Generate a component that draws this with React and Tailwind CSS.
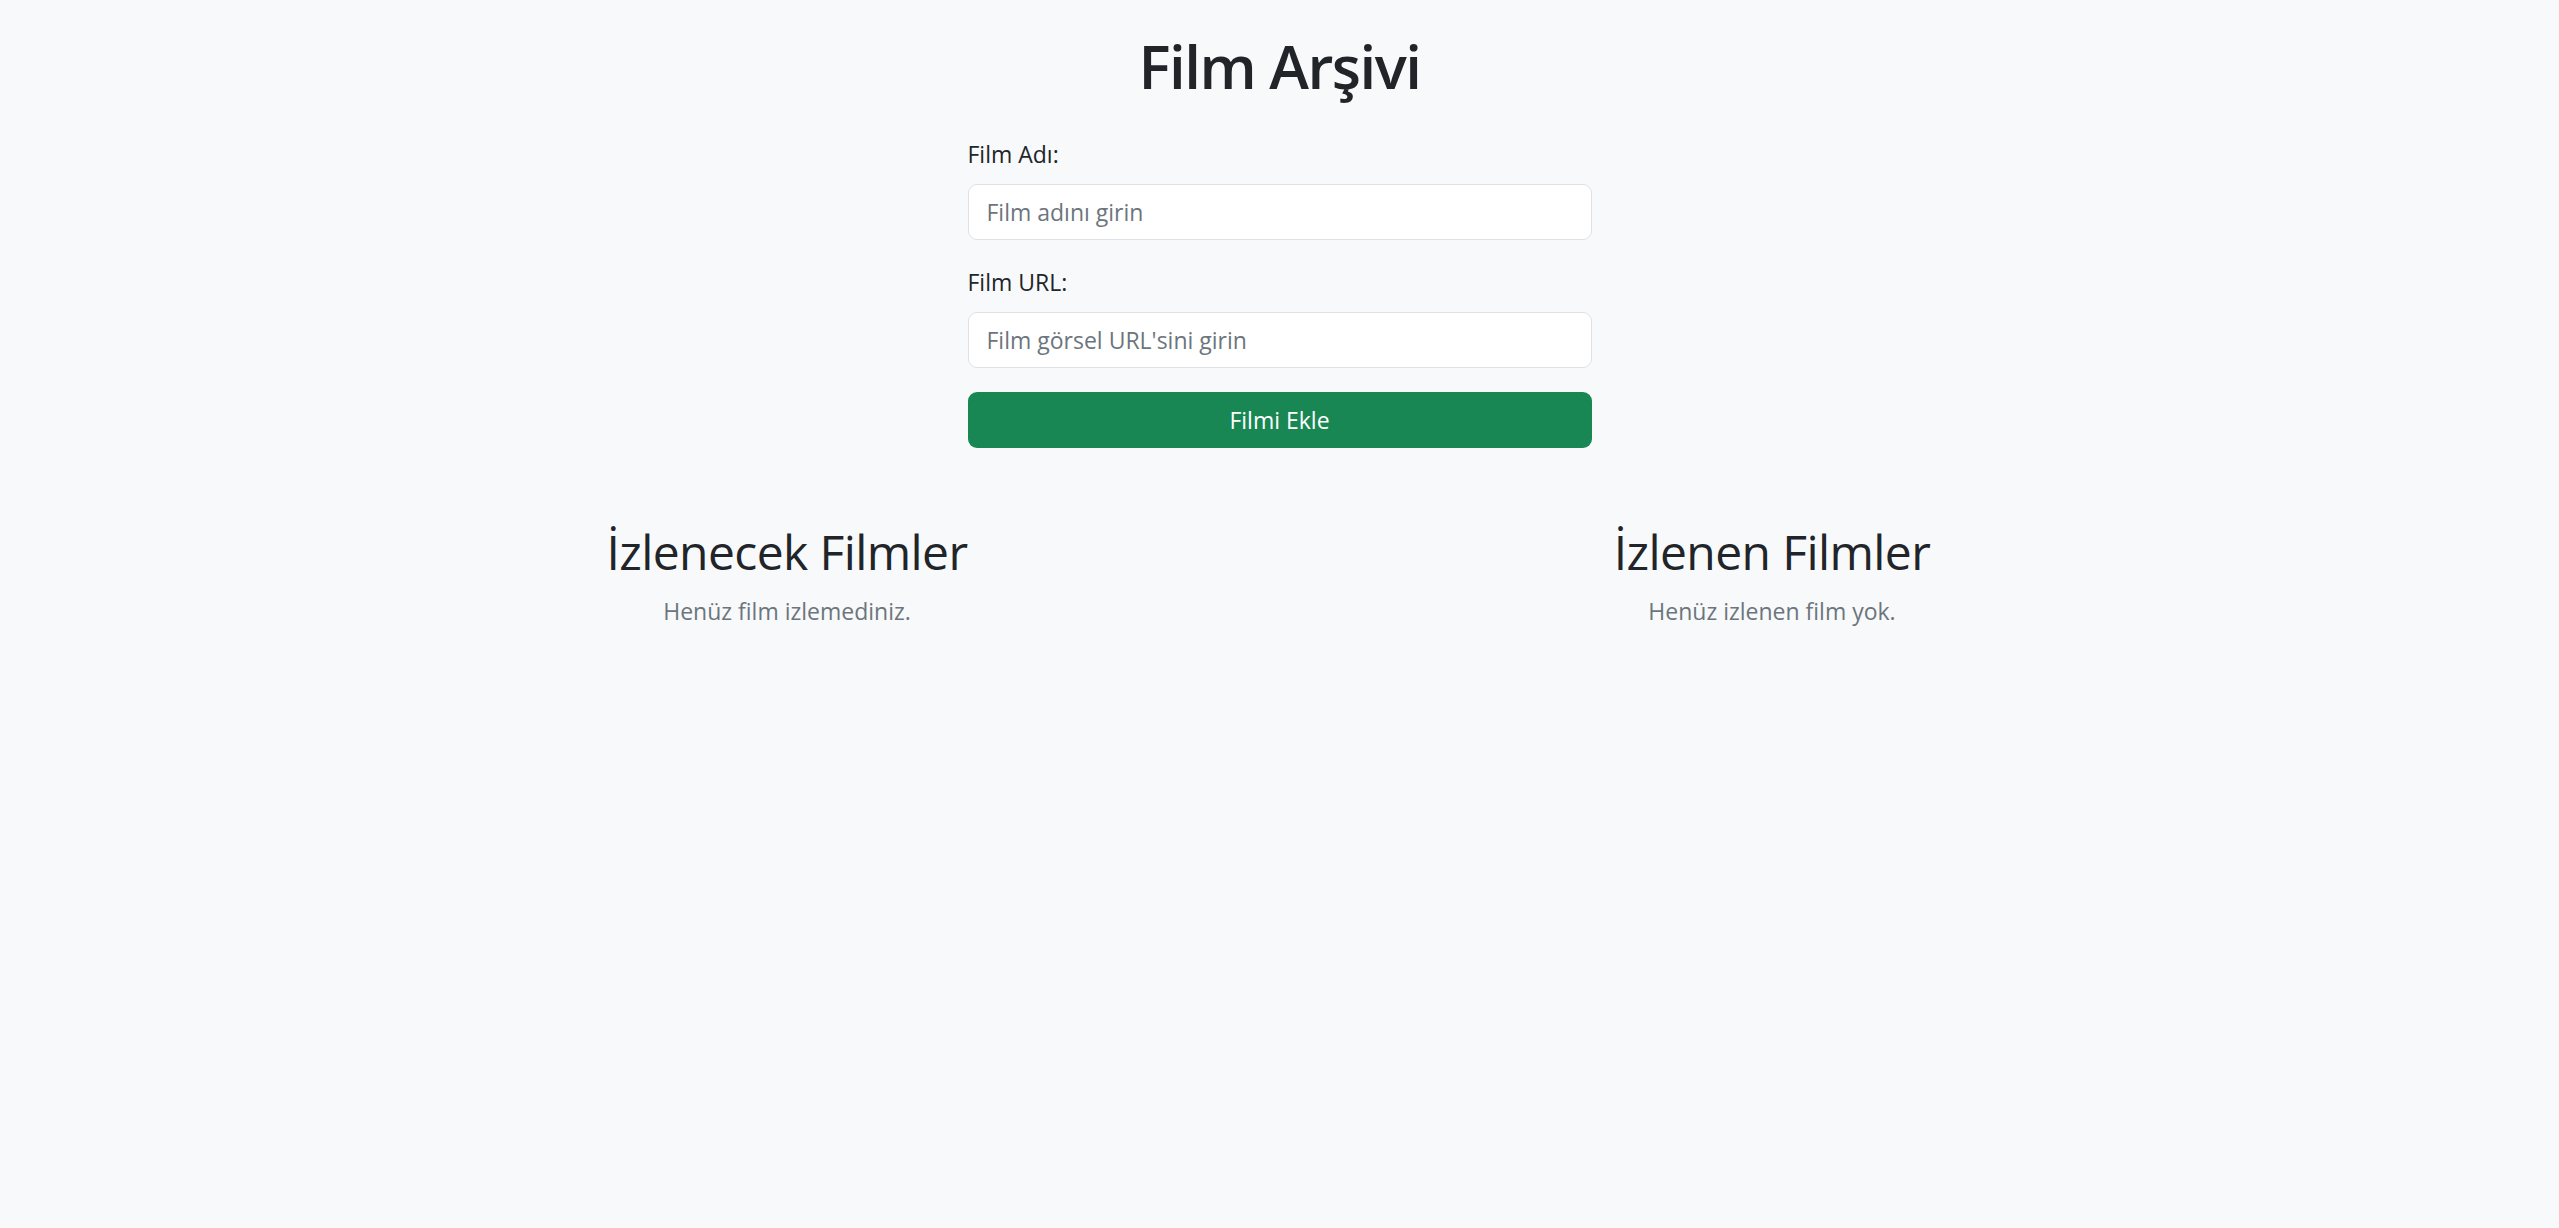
import React from "react";

function Field({ label, placeholder }) {
  return (
    <div className="mb-[24px]">
      <label className="block mb-[12px] text-[23px] leading-[36px] text-[#212529]">{label}</label>
      <input
        type="text"
        placeholder={placeholder}
        className="block w-full h-[56px] px-[18px] bg-white border border-[#dee2e6] rounded-[9px] text-[23px] text-[#212529] placeholder:text-[#6c757d] outline-none"
      />
    </div>
  );
}

export default function App() {
  return (
    <div className="min-h-[1228px] bg-[#f8f9fa] text-[#212529] font-['Open_Sans',sans-serif]">
      <div className="w-[1970px] mx-auto pt-[30px]">
        <h1 className="text-center text-[60px] leading-[72px] font-semibold tracking-[-1.5px] mb-[34px]">Film Arşivi</h1>

        <form className="w-[624px] mx-auto" onSubmit={(e) => e.preventDefault()}>
          <Field label="Film Adı:" placeholder="Film adını girin" />
          <Field label="Film URL:" placeholder="Film görsel URL'sini girin" />
          <button
            type="submit"
            className="block w-full h-[56px] bg-[#198754] text-white text-[23px] rounded-[9px]"
          >
            Filmi Ekle
          </button>
        </form>

        <div className="grid grid-cols-2 mt-[75px]">
          <div className="text-center">
            <h2 className="text-[48px] leading-[58px] font-normal tracking-[-0.6px] mb-[12px]">İzlenecek Filmler</h2>
            <p className="text-[23px] leading-[36px] text-[#6c757d]">Henüz film izlemediniz.</p>
          </div>
          <div className="text-center">
            <h2 className="text-[48px] leading-[58px] font-normal tracking-[-0.6px] mb-[12px]">İzlenen Filmler</h2>
            <p className="text-[23px] leading-[36px] text-[#6c757d]">Henüz izlenen film yok.</p>
          </div>
        </div>
      </div>
    </div>
  );
}
